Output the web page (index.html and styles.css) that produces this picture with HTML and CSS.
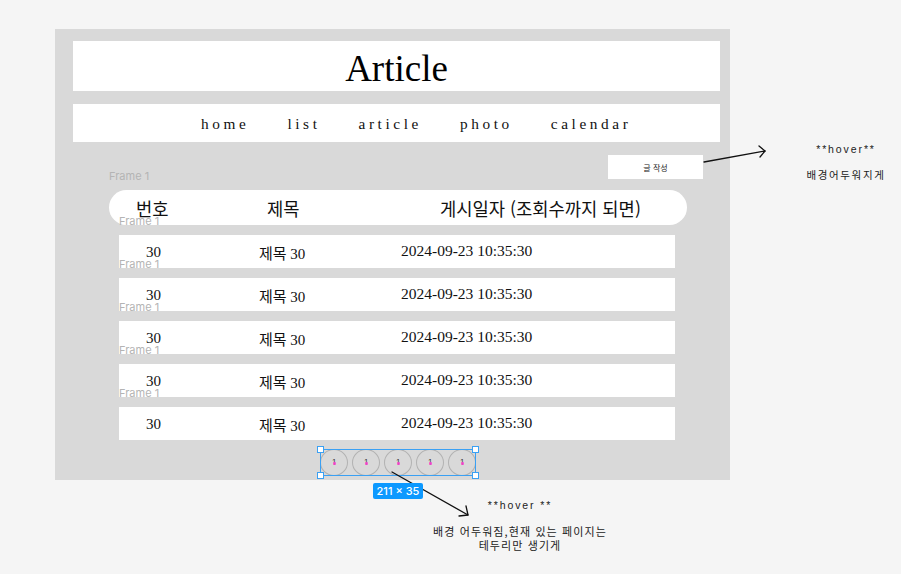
FILE: index.html
```html
<!DOCTYPE html>
<html lang="ko">
<head>
<meta charset="utf-8">
<title>Article</title>
<link rel="stylesheet" href="styles.css">
</head>
<body>
<div class="canvas">
  <main class="frame">
    <header class="title-box"><h1 class="title">Article</h1></header>
    <nav class="nav">
      <a class="nav-link">home</a>
      <a class="nav-link">list</a>
      <a class="nav-link">article</a>
      <a class="nav-link">photo</a>
      <a class="nav-link">calendar</a>
    </nav>
    <div class="actions"><button class="write-btn">글 작성</button></div>
    <section class="board">
      <div class="thead">
        <span class="flabel">Frame 1</span>
        <span class="th th-no">번호</span>
        <span class="th th-title">제목</span>
        <span class="th th-date">게시일자 (조회수까지 되면)</span>
      </div>
      <div class="row"><span class="flabel">Frame 1</span><span class="td td-no">30</span><span class="td td-title">제목 30</span><span class="td td-date">2024-09-23 10:35:30</span></div>
      <div class="row"><span class="flabel">Frame 1</span><span class="td td-no">30</span><span class="td td-title">제목 30</span><span class="td td-date">2024-09-23 10:35:30</span></div>
      <div class="row"><span class="flabel">Frame 1</span><span class="td td-no">30</span><span class="td td-title">제목 30</span><span class="td td-date">2024-09-23 10:35:30</span></div>
      <div class="row"><span class="flabel">Frame 1</span><span class="td td-no">30</span><span class="td td-title">제목 30</span><span class="td td-date">2024-09-23 10:35:30</span></div>
      <div class="row"><span class="flabel">Frame 1</span><span class="td td-no">30</span><span class="td td-title">제목 30</span><span class="td td-date">2024-09-23 10:35:30</span></div>
    </section>
    <div class="pager">
      <span class="page">1</span>
      <span class="page">1</span>
      <span class="page">1</span>
      <span class="page">1</span>
      <span class="page">1</span>
      <span class="sel">
        <i class="hdl hdl-tl"></i><i class="hdl hdl-tr"></i><i class="hdl hdl-bl"></i><i class="hdl hdl-br"></i>
      </span>
      <span class="size-tag">211 × 35</span>
    </div>
  </main>

  <svg class="arrows" width="901" height="574" viewBox="0 0 901 574">
    <g fill="none" stroke="#111" stroke-width="1.3" stroke-linecap="round" stroke-linejoin="round">
      <path d="M704 162 L765 151"/>
      <path d="M759 146 L765 151 L760 157"/>
      <path d="M392 472 L468 515"/>
      <path d="M466 506 L468 515 L459 516"/>
    </g>
  </svg>

  <div class="note note-right">
    <p class="note-hover">**hover**</p>
    <p class="note-text">배경어두워지게</p>
  </div>
  <div class="note note-bottom">
    <p class="note-hover">**hover **</p>
    <p class="note-text2">배경 어두워짐,현재 있는 페이지는<br>테두리만 생기게</p>
  </div>
</div>
</body>
</html>
```

FILE: styles.css
```css
* { box-sizing: border-box; }
html, body { margin: 0; padding: 0; }
body {
  width: 901px;
  height: 574px;
  overflow: hidden;
  background: #f5f5f5;
  font-family: "Liberation Serif", "Noto Sans CJK KR", serif;
  color: #111;
}
.canvas {
  position: relative;
  width: 901px;
  height: 574px;
  padding: 29px 0 0 55px;
}
.frame {
  width: 675px;
  height: 451px;
  background: #d9d9d9;
  padding: 12px 10px 0 18px;
  display: flex;
  flex-direction: column;
}
.title-box {
  height: 50px;
  background: #fff;
  display: flex;
  align-items: center;
  justify-content: center;
}
.title {
  margin: 0;
  font-weight: 400;
  font-size: 37px;
  line-height: 1;
  padding-top: 4px;
  color: #000;
}
.nav {
  margin-top: 13px;
  height: 38px;
  background: #fff;
  display: flex;
  align-items: center;
  padding-left: 128px;
  gap: 38px;
}
.nav-link {
  font-size: 15.3px;
  letter-spacing: 3.6px;
  color: #111;
  padding-top: 1px;
}
.actions {
  margin-top: 13px;
  display: flex;
  justify-content: flex-end;
  padding-right: 17px;
}
.write-btn {
  width: 95px;
  height: 24px;
  border: 0;
  background: #fff;
  font-family: "Noto Sans CJK KR", sans-serif;
  font-size: 8px;
  color: #222;
  padding: 0;
}
.board {
  margin-top: 11px;
  display: flex;
  flex-direction: column;
  gap: 10px;
}
.flabel {
  position: absolute;
  left: 0;
  top: -20px;
  font-family: "Inter", "Liberation Sans", sans-serif;
  font-size: 11px;
  line-height: 13px;
  color: #b4b4b4;
  white-space: nowrap;
}
.thead {
  position: relative;
  margin-left: 36px;
  width: 578px;
  height: 35px;
  background: #fff;
  border-radius: 18px;
  display: flex;
  align-items: center;
  padding: 0 0 0 27px;
}
.th {
  font-family: "Noto Sans CJK KR", sans-serif;
  font-size: 17.7px;
  color: #111;
  white-space: nowrap;
}
.th-no { width: 131px; }
.th-title { width: 173px; }
.row {
  position: relative;
  margin-left: 46px;
  width: 556px;
  height: 33px;
  background: #fff;
  display: flex;
  align-items: center;
  padding: 2px 0 0 27px;
}
.td {
  font-size: 15px;
  white-space: nowrap;
  color: #111;
}
.td-no { width: 113px; }
.td-title { width: 142px; }
.td-date { font-size: 15.5px; margin-top: -3px; }
.pager {
  position: relative;
  margin-top: 9px;
  margin-left: 247px;
  width: 156px;
  height: 27px;
  display: flex;
  gap: 4px;
}
.page {
  position: relative;
  width: 28px;
  height: 27px;
  border: 1px solid #b2b2b2;
  border-radius: 50%;
  display: flex;
  align-items: center;
  justify-content: center;
  font-family: "Inter", "Liberation Sans", sans-serif;
  font-size: 7px;
  color: #333;
}
.page::after {
  content: "";
  position: absolute;
  left: 12px;
  top: 12px;
  width: 3px;
  height: 3px;
  background: #ff3dd0;
  border-radius: 1px;
  opacity: 0.8;
}
.sel {
  position: absolute;
  left: 0;
  top: 0;
  width: 156px;
  height: 27px;
  border: 1px solid #3aa0f3;
}
.hdl {
  position: absolute;
  width: 7px;
  height: 7px;
  background: #fff;
  border: 1px solid #3aa0f3;
}
.hdl-tl { left: -4px; top: -4px; }
.hdl-tr { right: -4px; top: -4px; }
.hdl-bl { left: -4px; bottom: -4px; }
.hdl-br { right: -4px; bottom: -4px; }
.size-tag {
  position: absolute;
  left: 53px;
  top: 34px;
  width: 50px;
  height: 16px;
  z-index: 3;
  background: #0d99ff;
  color: #fff;
  border-radius: 2px;
  font-family: "Inter", "Liberation Sans", sans-serif;
  font-size: 11px;
  font-weight: 500;
  line-height: 16px;
  text-align: center;
}
.arrows {
  position: absolute;
  left: 0;
  top: 0;
  pointer-events: none;
  z-index: 2;
}
.note {
  position: absolute;
  text-align: center;
  font-family: "Noto Sans CJK KR", sans-serif;
  color: #222;
}
.note p { margin: 0; }
.note-right { left: 796px; top: 142px; width: 100px; }
.note-bottom { left: 420px; top: 498px; width: 200px; }
.note-hover {
  font-family: "Liberation Sans", sans-serif;
  font-size: 10.5px;
  letter-spacing: 1.9px;
  line-height: 14px;
}
.note-text {
  margin-top: 12px !important;
  font-size: 10.5px;
  letter-spacing: 1.6px;
  line-height: 14px;
}
.note-text2 {
  margin-top: 12px !important;
  font-size: 11px;
  letter-spacing: 1.1px;
  line-height: 14px;
}
```
